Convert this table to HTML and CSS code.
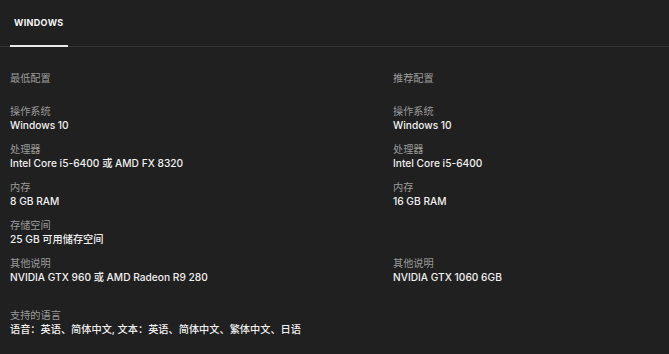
FILE: index.html
```html
<!DOCTYPE html>
<html lang="zh">
<head>
<meta charset="utf-8">
<link rel="stylesheet" href="styles.css">
</head>
<body>
<div class="tabs">
  <div class="tab">WINDOWS</div>
</div>
<div class="specs">
  <div class="col">
    <div class="heading">最低配置</div>
    <div class="item"><div class="label">操作系统</div><div class="value">Windows 10</div></div>
    <div class="item"><div class="label">处理器</div><div class="value">Intel Core i5-6400 或 AMD FX 8320</div></div>
    <div class="item"><div class="label">内存</div><div class="value">8 GB RAM</div></div>
    <div class="item"><div class="label">存储空间</div><div class="value">25 GB 可用储存空间</div></div>
    <div class="item"><div class="label">其他说明</div><div class="value">NVIDIA GTX 960 或 AMD Radeon R9 280</div></div>
  </div>
  <div class="col">
    <div class="heading">推荐配置</div>
    <div class="item"><div class="label">操作系统</div><div class="value">Windows 10</div></div>
    <div class="item"><div class="label">处理器</div><div class="value">Intel Core i5-6400</div></div>
    <div class="item"><div class="label">内存</div><div class="value">16 GB RAM</div></div>
    <div class="item empty"><div class="label">&nbsp;</div><div class="value">&nbsp;</div></div>
    <div class="item"><div class="label">其他说明</div><div class="value">NVIDIA GTX 1060 6GB</div></div>
  </div>
</div>
<div class="langs">
  <div class="label">支持的语言</div>
  <div class="value">语音：英语、简体中文, 文本：英语、简体中文、繁体中文、日语</div>
</div>
</body>
</html>
```

FILE: styles.css
```css
html, body {
  margin: 0;
  padding: 0;
  background: #202020;
  height: 100%;
}
body {
  font-family: Inter, "Noto Sans CJK SC", sans-serif;
  font-size: 10.2px;
  line-height: 14px;
  color: #f0f0f0;
}
.tabs {
  display: flex;
  border-bottom: 1px solid #343434;
  padding-left: 10px;
  height: 47px;
  box-sizing: border-box;
}
.tab {
  width: 58px;
  box-sizing: border-box;
  padding-top: 16px;
  padding-left: 4px;
  font-size: 9px;
  font-weight: 700;
  letter-spacing: 0.35px;
  color: #f5f5f5;
  border-bottom: 2px solid #e8e8e8;
  margin-bottom: -1px;
}
.specs {
  display: grid;
  grid-template-columns: 383px 1fr;
  padding: 24px 0 0 10px;
}
.heading {
  color: #9a9a9a;
  margin-bottom: 19px;
}
.item {
  margin-bottom: 10px;
}
.label {
  color: #9a9a9a;
}
.value {
  color: #f0f0f0;
  font-weight: 500;
}
.langs {
  padding: 14px 0 0 10px;
}
```
